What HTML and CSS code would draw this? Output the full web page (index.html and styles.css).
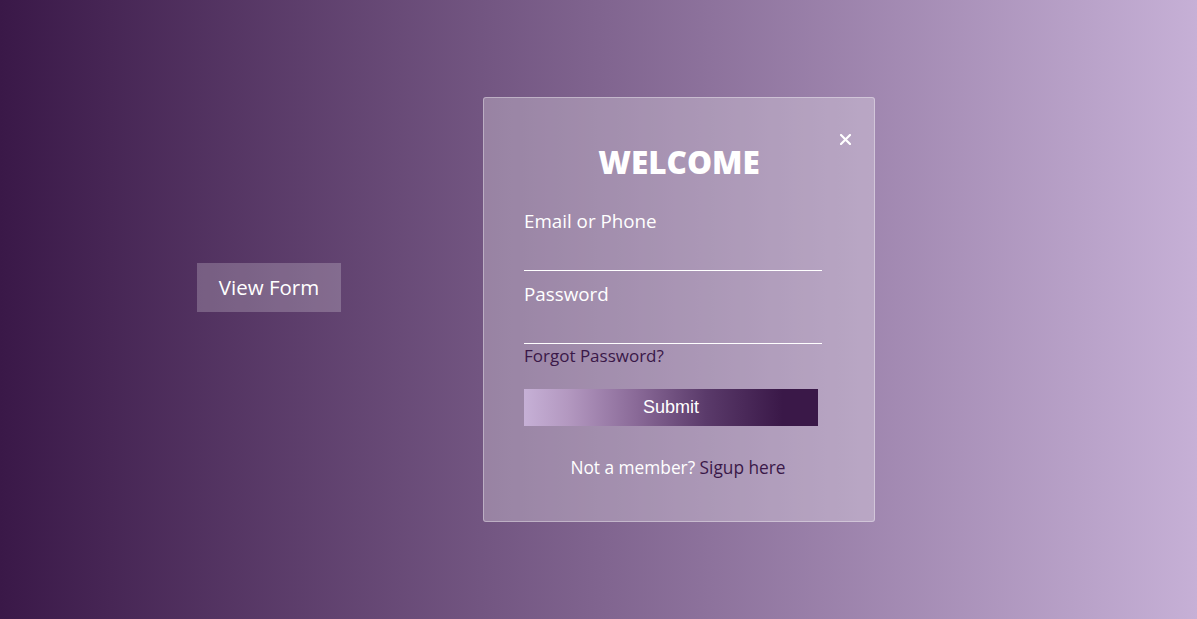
FILE: index.html
```html
<!DOCTYPE html>
<html lang="en">
<head>
<meta charset="utf-8">
<title>Login</title>
<link rel="stylesheet" href="styles.css">
</head>
<body>
<main class="stage">
  <button class="view-btn" type="button">View Form</button>
  <form class="modal">
    <button class="close" type="button" aria-label="Close">
      <svg width="11" height="11" viewBox="0 0 11 11"><path d="M1 1L10 10M10 1L1 10" stroke="#fff" stroke-width="2.2" stroke-linecap="round"/></svg>
    </button>
    <h2 class="title">WELCOME</h2>
    <label class="field">
      <span class="label">Email or Phone</span>
      <input class="input" type="text">
    </label>
    <label class="field">
      <span class="label">Password</span>
      <input class="input" type="password">
    </label>
    <a class="forgot" href="#">Forgot Password?</a>
    <button class="submit" type="button">Submit</button>
    <p class="signup">Not a member? <a href="#">Sigup here</a></p>
  </form>
</main>
</body>
</html>
```
FILE: styles.css
```css
html, body {
  margin: 0;
  height: 100%;
}
body {
  font-family: "Open Sans", "Liberation Sans", sans-serif;
  background: linear-gradient(to right, #3a1848 0%, #c6b0d6 100%);
  overflow: hidden;
}
.stage {
  position: relative;
  height: 100%;
  box-sizing: border-box;
  padding: 263px 0 0 197px;
}
.view-btn {
  width: 144px;
  height: 49px;
  border: none;
  background: rgba(255, 255, 255, 0.22);
  color: #fff;
  font-family: inherit;
  font-size: 20.5px;
  font-weight: 500;
  padding: 0 0 2px 0;
}
.modal {
  position: absolute;
  left: 483px;
  top: 97px;
  width: 392px;
  height: 425px;
  box-sizing: border-box;
  padding: 44px 52px 0 40px;
  background: rgba(255, 255, 255, 0.27);
  border: 1px solid rgba(255, 255, 255, 0.35);
  border-radius: 3px;
  margin: 0;
}
.close {
  position: absolute;
  top: 36px;
  right: 23px;
  background: none;
  border: none;
  padding: 0;
  width: 11px;
  height: 11px;
  display: flex;
}
.title {
  margin: 0;
  text-align: center;
  color: #fff;
  font-size: 31.5px;
  font-weight: 800;
  line-height: 40px;
  padding-left: 12px;
}
.field {
  display: flex;
  flex-direction: column;
  margin-top: 26px;
}
.field + .field { margin-top: 10px; }
.label {
  color: #fff;
  font-size: 18.8px;
  line-height: 26px;
}
.input {
  height: 36px;
  border: none;
  border-bottom: 1px solid #fff;
  background: transparent;
  padding: 0;
  outline: none;
}
.forgot {
  display: block;
  margin-top: 1px;
  color: #3a1848;
  font-size: 17px;
  line-height: 22px;
  text-decoration: none;
}
.submit {
  display: block;
  margin-top: 22px;
  width: 294px;
  height: 37px;
  border: none;
  padding: 0;
  color: #fff;
  font-family: "Liberation Sans", Arial, sans-serif;
  font-size: 18px;
  background: linear-gradient(to right, #c6b0d6 0%, #b398c0 15%, #8a6a98 38%, #5a3a6a 62%, #3a1848 88%, #3a1848 100%);
}
.signup {
  margin: 31px 0 0 0;
  text-align: center;
  color: #fff;
  font-size: 17.3px;
  line-height: 22px;
  padding-left: 10px;
}
.signup a {
  color: #3a1848;
  text-decoration: none;
}
```
